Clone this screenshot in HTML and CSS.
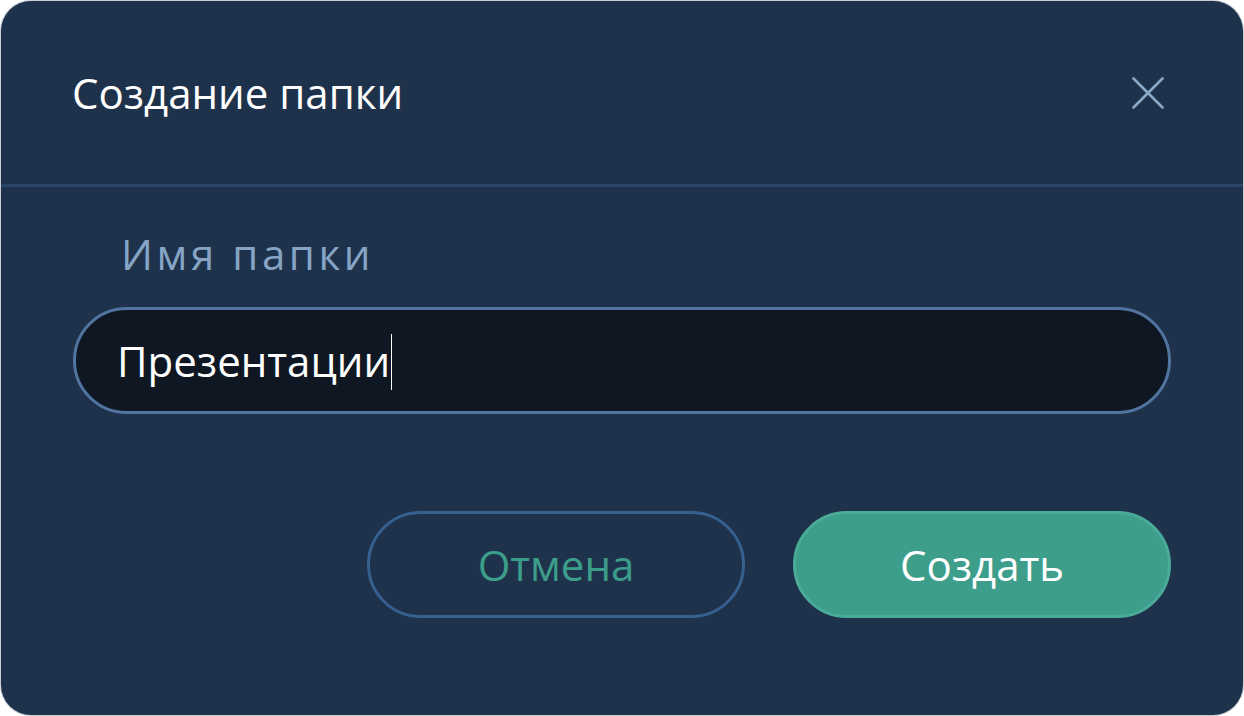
FILE: index.html
```html
<!DOCTYPE html>
<html lang="ru">
<head>
<meta charset="utf-8">
<title>Создание папки</title>
<link rel="stylesheet" href="styles.css">
</head>
<body>
<div class="dialog">
  <div class="dialog-header">
    <h1 class="dialog-title">Создание папки</h1>
    <button class="close-btn" aria-label="Закрыть">
      <svg width="32" height="32" viewBox="0 0 32 32" aria-hidden="true">
        <path d="M1.5 1.5 L30.5 30.5 M30.5 1.5 L1.5 30.5" stroke="#8aa9c8" stroke-width="2.6" stroke-linecap="round" fill="none"/>
      </svg>
    </button>
  </div>
  <div class="dialog-body">
    <label class="field-label">Имя папки</label>
    <div class="text-input"><span class="input-value">Презентации</span><span class="caret"></span></div>
    <div class="actions">
      <button class="btn btn-cancel">Отмена</button>
      <button class="btn btn-create">Создать</button>
    </div>
  </div>
</div>
</body>
</html>
```
FILE: styles.css
```css
* { box-sizing: border-box; }
html, body { margin: 0; padding: 0; background: #ffffff; }
body {
  font-family: "Open Sans", "Noto Sans", sans-serif;
  width: 1244px;
  height: 716px;
  overflow: hidden;
}
.dialog {
  margin: 1px;
  width: 1242px;
  height: 714px;
  background: #1f324c;
  border-radius: 30px;
  box-shadow: 0 0 0 1px #c9ced6;
  display: flex;
  flex-direction: column;
}
.dialog-header {
  height: 186px;
  border-bottom: 3px solid #294466;
  display: flex;
  align-items: center;
  justify-content: space-between;
  padding: 0 73px 0 71px;
}
.dialog-title {
  margin: 0;
  font-size: 42px;
  font-weight: 400;
  color: #ffffff;
  line-height: 57px;
  padding-top: 0;
}
.close-btn {
  width: 44px;
  height: 44px;
  padding: 0;
  border: 0;
  background: transparent;
  display: flex;
  align-items: center;
  justify-content: center;
}
.dialog-body {
  padding: 38px 72px 0 72px;
  display: flex;
  flex-direction: column;
}
.field-label {
  font-size: 42px;
  line-height: 57px;
  letter-spacing: 3.6px;
  color: #86a5c5;
  padding-left: 48px;
}
.text-input {
  margin-top: 25px;
  height: 107px;
  border: 3px solid #5274a0;
  border-radius: 54px;
  background: #0f1723;
  display: flex;
  align-items: center;
  padding-left: 41px;
}
.input-value {
  font-size: 42px;
  line-height: 57px;
  color: #ffffff;
}
.caret {
  width: 1px;
  height: 56px;
  background: #ffffff;
  margin-left: 1px;
  margin-top: 2px;
}
.actions {
  margin-top: 97px;
  display: flex;
  justify-content: flex-end;
  gap: 48px;
}
.btn {
  height: 107px;
  width: 378px;
  border-radius: 54px;
  font-family: "Open Sans", "Noto Sans", sans-serif;
  font-size: 42px;
  line-height: 57px;
  padding: 0;
}
.btn-cancel {
  background: transparent;
  border: 3px solid #36608f;
  color: #3c9e8a;
}
.btn-create {
  background: #3e9e8c;
  border: 3px solid #4aac98;
  color: #ffffff;
}
```
